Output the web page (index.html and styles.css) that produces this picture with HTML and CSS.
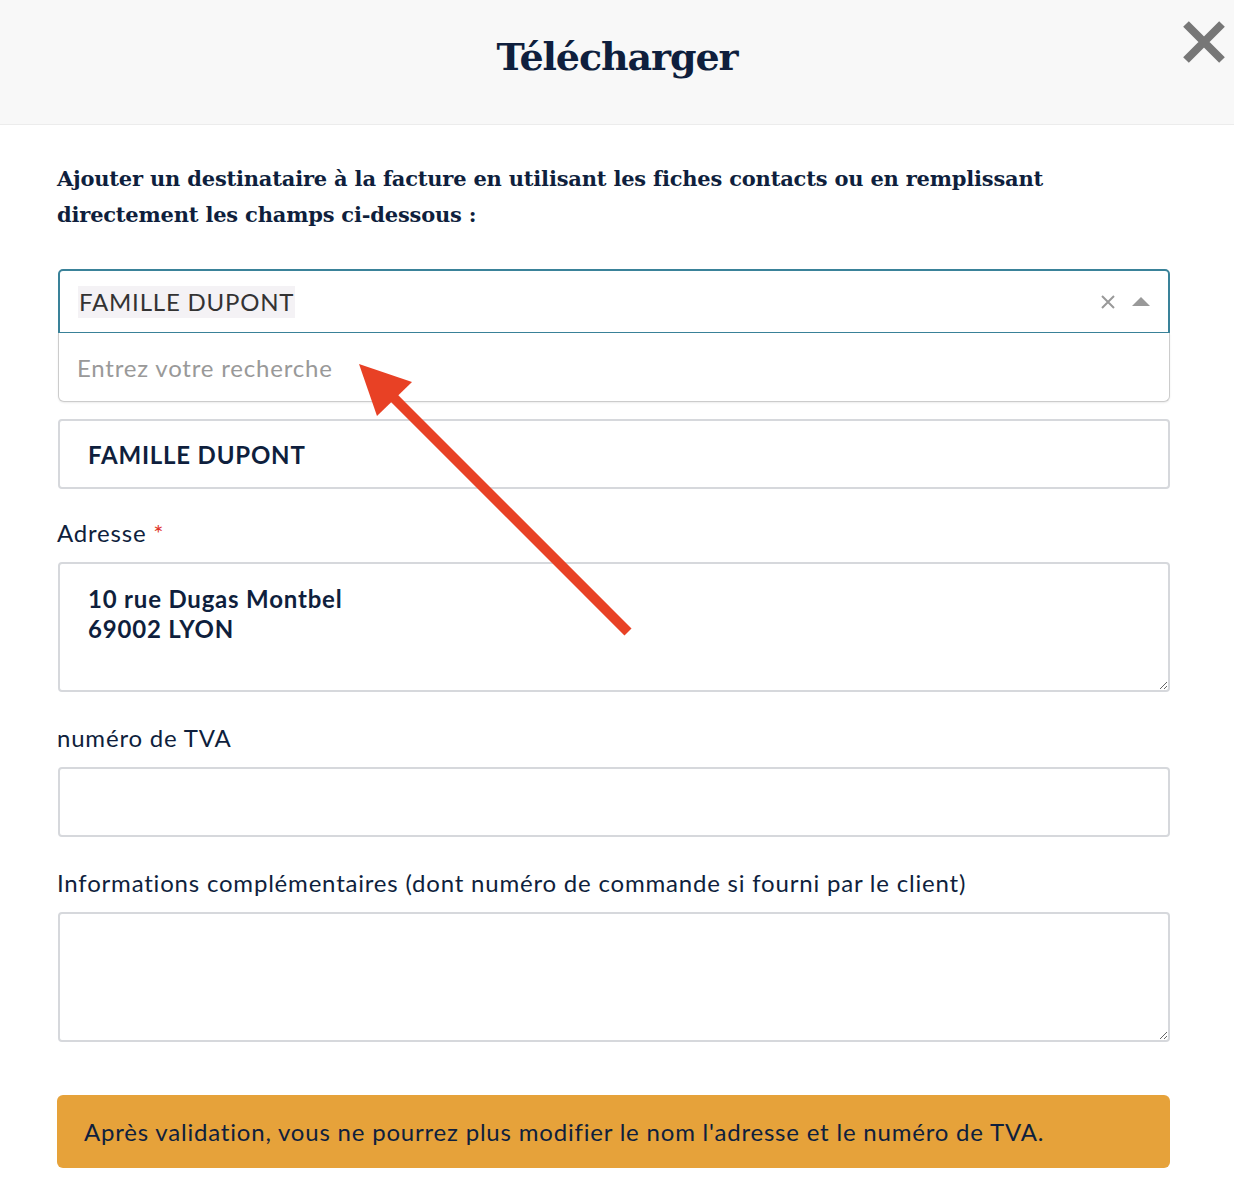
FILE: index.html
```html
<!DOCTYPE html>
<html lang="fr">
<head>
<meta charset="utf-8">
<title>Télécharger</title>
<link rel="stylesheet" href="styles.css">
</head>
<body>
<div class="modal">
  <header class="modal-header">
    <h1 class="modal-title">Télécharger</h1>
    <button class="close-btn" aria-label="Fermer">
      <svg width="44" height="44" viewBox="0 0 44 44"><path d="M4 4 L40 40 M40 4 L4 40" stroke="#777" stroke-width="8" stroke-linecap="butt"/></svg>
    </button>
  </header>
  <div class="modal-body">
    <p class="intro">Ajouter un destinataire à la facture en utilisant les fiches contacts ou en remplissant directement les champs ci-dessous :</p>

    <div class="select">
      <div class="select-control">
        <span class="select-value">FAMILLE DUPONT</span>
        <span class="select-icons">
          <svg class="clear-icon" width="16" height="16" viewBox="0 0 16 16"><path d="M2 2 L14 14 M14 2 L2 14" stroke="#999" stroke-width="2"/></svg>
          <svg class="caret-icon" width="18" height="10" viewBox="0 0 18 10"><path d="M0 10 L9 1 L18 10 Z" fill="#999"/></svg>
        </span>
      </div>
      <div class="select-dropdown">
        <span class="search-placeholder">Entrez votre recherche</span>
      </div>
    </div>

    <div class="input input-name">FAMILLE DUPONT</div>

    <label class="label label-first">Adresse <span class="req">*</span></label>
    <textarea class="textarea">10 rue Dugas Montbel
69002 LYON</textarea>

    <label class="label">numéro de TVA</label>
    <div class="input"></div>

    <label class="label">Informations complémentaires (dont numéro de commande si fourni par le client)</label>
    <textarea class="textarea"></textarea>

    <div class="alert">Après validation, vous ne pourrez plus modifier le nom l'adresse et le numéro de TVA.</div>
  </div>
</div>
<svg class="arrow" width="1234" height="1198" viewBox="0 0 1234 1198">
  <line x1="628" y1="632" x2="392" y2="396" stroke="#e84125" stroke-width="10"/>
  <path d="M359 364 L412 382 L377 416 Z" fill="#e84125"/>
</svg>
</body>
</html>
```
FILE: styles.css
```css
* { box-sizing: border-box; }
html, body { margin: 0; padding: 0; background: #fff; }
body { font-family: "Lato", "Open Sans", sans-serif; color: #0f1f3d; position: relative; letter-spacing: 0.8px; }

.modal { width: 1234px; }

.modal-header {
  height: 125px;
  background: #f8f8f8;
  border-bottom: 1px solid #ececec;
  display: flex;
  align-items: center;
  justify-content: center;
  position: relative;
}
.modal-title {
  margin: 0;
  font-family: "DejaVu Serif", "Liberation Serif", serif;
  font-weight: bold;
  font-size: 38px;
  color: #0f1f3d;
  letter-spacing: -1.1px;
  transform: translateY(-6px);
}
.close-btn {
  position: absolute;
  top: 20px;
  right: 8px;
  width: 44px;
  height: 44px;
  padding: 0;
  border: 0;
  background: none;
}
.close-btn svg { display: block; }

.modal-body { padding: 36px 64px 30px 57px; }

.intro {
  margin: 0 0 36px;
  font-family: "DejaVu Serif", "Liberation Serif", serif;
  font-weight: bold;
  font-size: 21px;
  line-height: 36px;
  letter-spacing: -0.2px;
  color: #0f1f3d;
}

.select { position: relative; margin-left: 1px; }
.select-control {
  height: 64px;
  border: 2px solid #3a8299;
  border-bottom-width: 1px;
  border-radius: 5px 5px 0 0;
  display: flex;
  align-items: center;
  padding: 0 18px 0 18px;
}
.select-value {
  font-size: 24px;
  color: #333;
  background: #f4f2f5;
  padding: 2px 1px;
  line-height: 28px;
}
.select-icons { margin-left: auto; display: flex; align-items: center; gap: 16px; }
.clear-icon { display: block; }
.caret-icon { display: block; margin-top: -2px; }
.select-dropdown {
  position: absolute;
  left: 0; right: 0;
  top: 64px;
  height: 69px;
  border: 1px solid #ccc;
  border-top: 0;
  border-radius: 0 0 6px 6px;
  background: #fff;
  box-shadow: 0 1px 2px rgba(0,0,0,0.08);
  display: flex;
  align-items: center;
  padding: 0 18px;
  z-index: 2;
}
.search-placeholder { font-size: 24px; color: #999; }

.input {
  height: 70px;
  border: 2px solid #d6d8dc;
  border-radius: 4px;
  margin-left: 1px;
  display: flex;
  align-items: center;
  padding: 0 28px;
  font-size: 24px;
  font-weight: bold;
  color: #0f1f3d;
}
.input-name { margin-top: 86px; }

.label {
  display: block;
  font-size: 24px;
  line-height: 30px;
  margin: 31px 0 14px;
  color: #0f1f3d;
}
.label-first { margin-top: 29px; }
.req { color: #e0352b; }

.textarea {
  display: block;
  width: calc(100% - 1px);
  margin-left: 1px;
  height: 130px;
  border: 2px solid #d6d8dc;
  border-radius: 4px;
  padding: 20px 28px;
  font-family: inherit;
  font-size: 24px;
  font-weight: bold;
  line-height: 30px;
  letter-spacing: 0.8px;
  color: #0f1f3d;
  resize: vertical;
  outline: none;
}

.alert {
  margin-top: 53px;
  height: 73px;
  background: #e6a23a;
  border-radius: 6px;
  display: flex;
  align-items: center;
  padding: 0 27px;
  font-size: 24px;
  color: #0f1f3d;
}

.arrow { position: absolute; left: 0; top: 0; pointer-events: none; z-index: 5; }
```
